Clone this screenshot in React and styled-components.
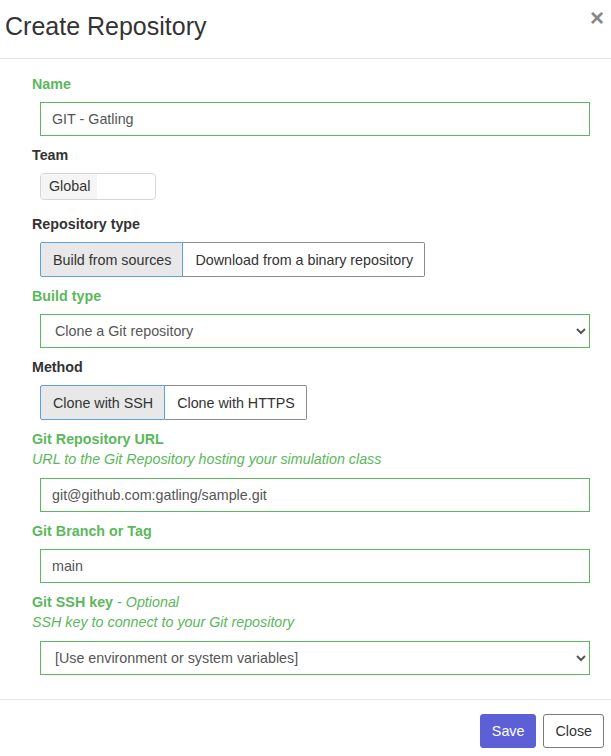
import React from 'react';
import styled, { createGlobalStyle } from 'styled-components';

const GlobalStyle = createGlobalStyle`
  html, body {
    margin: 0;
    padding: 0;
    background: #fff;
  }
  body {
    font-family: "Liberation Sans", Arial, sans-serif;
    font-size: 14.3px;
    line-height: 20px;
    color: #333;
  }
  * {
    box-sizing: border-box;
  }
`;

const Modal = styled.div`
  width: 611px;
  display: flex;
  flex-direction: column;
`;

const Header = styled.div`
  position: relative;
  height: 59px;
  border-bottom: 1px solid #e5e5e5;
  padding: 9px 0 0 5px;
`;

const Title = styled.h4`
  margin: 0;
  font-size: 25px;
  font-weight: 400;
  line-height: 34px;
  color: #333;
`;

const CloseX = styled.button`
  position: absolute;
  top: 4px;
  right: 7px;
  border: none;
  background: none;
  padding: 0;
  font-family: "Liberation Sans", Arial, sans-serif;
  font-size: 24px;
  font-weight: 700;
  line-height: 28px;
  color: #888;
  cursor: pointer;
`;

const Body = styled.div`
  padding: 15px 21px 24px 32px;
  display: flex;
  flex-direction: column;
`;

const Group = styled.div`
  display: flex;
  flex-direction: column;
  margin-bottom: ${(p) => (p.$gap !== undefined ? p.$gap : 9)}px;
`;

const Label = styled.label`
  font-weight: 700;
  line-height: 20px;
  color: ${(p) => (p.$success ? '#5cb85c' : '#333')};
  margin-bottom: ${(p) => (p.$tight ? 0 : 8)}px;
`;

const Optional = styled.span`
  font-weight: 400;
  font-style: italic;
`;

const Help = styled.div`
  font-style: italic;
  color: #5cb85c;
  line-height: 20px;
  margin-bottom: 9px;
`;

const Control = styled.div`
  margin-left: 8px;
  display: flex;
`;

const Input = styled.input`
  width: 100%;
  height: 34px;
  padding: 6px 11px;
  border: 1px solid #5cb85c;
  border-radius: 0;
  font-family: "Liberation Sans", Arial, sans-serif;
  font-size: 14.3px;
  color: #555;
  background: #fff;
  outline: none;
`;

const Select = styled.select`
  width: 100%;
  height: 34px;
  padding: 6px 10px;
  border: 1px solid #5cb85c;
  border-radius: 0;
  font-family: "Liberation Sans", Arial, sans-serif;
  font-size: 14.3px;
  color: #555;
  background: #fff;
  outline: none;
`;

const TeamBox = styled.div`
  display: flex;
  width: 116px;
  height: 27px;
  border: 1px solid #d6d6d6;
  border-radius: 4px;
  overflow: hidden;
`;

const TeamName = styled.span`
  background: #f5f5f5;
  padding: 0 7px 0 8px;
  line-height: 25px;
  color: #333;
`;

const Toggle = styled.div`
  display: flex;
`;

const ToggleButton = styled.button`
  height: 35px;
  padding: 0 11px 0 12px;
  font-family: "Liberation Sans", Arial, sans-serif;
  font-size: 14.3px;
  color: #333;
  background: ${(p) => (p.$active ? '#e8e8e8' : '#fff')};
  border: 1px solid ${(p) => (p.$active ? '#5d9fe0' : '#8c8c8c')};
  border-left-width: ${(p) => (p.$active ? 1 : 0)}px;
  border-radius: ${(p) => (p.$active ? '2px 0 0 2px' : '0 2px 2px 0')};
  cursor: pointer;
`;

const Footer = styled.div`
  border-top: 1px solid #e5e5e5;
  padding: 14px 7px 7px 0;
  display: flex;
  justify-content: flex-end;
  gap: 7px;
`;

const Button = styled.button`
  height: 34px;
  padding: 0 11px;
  font-family: "Liberation Sans", Arial, sans-serif;
  font-size: 14.3px;
  border-radius: 3px;
  border: 1px solid ${(p) => (p.$primary ? '#5c5fd6' : '#7a7a7a')};
  background: ${(p) => (p.$primary ? '#5c5fd6' : '#fff')};
  color: ${(p) => (p.$primary ? '#fff' : '#333')};
  cursor: pointer;
`;

const App = () => {
  return (
    <Modal>
      <GlobalStyle />
      <Header>
        <Title>Create Repository</Title>
        <CloseX>×</CloseX>
      </Header>
      <Body>
        <Group>
          <Label $success>Name</Label>
          <Control>
            <Input defaultValue="GIT - Gatling" />
          </Control>
        </Group>
        <Group $gap={14}>
          <Label>Team</Label>
          <Control>
            <TeamBox>
              <TeamName>Global</TeamName>
            </TeamBox>
          </Control>
        </Group>
        <Group>
          <Label>Repository type</Label>
          <Control>
            <Toggle>
              <ToggleButton $active>Build from sources</ToggleButton>
              <ToggleButton>Download from a binary repository</ToggleButton>
            </Toggle>
          </Control>
        </Group>
        <Group>
          <Label $success>Build type</Label>
          <Control>
            <Select defaultValue="git">
              <option value="git">Clone a Git repository</option>
            </Select>
          </Control>
        </Group>
        <Group>
          <Label>Method</Label>
          <Control>
            <Toggle>
              <ToggleButton $active>Clone with SSH</ToggleButton>
              <ToggleButton>Clone with HTTPS</ToggleButton>
            </Toggle>
          </Control>
        </Group>
        <Group>
          <Label $success $tight>Git Repository URL</Label>
          <Help>URL to the Git Repository hosting your simulation class</Help>
          <Control>
            <Input defaultValue="git@github.com:gatling/sample.git" />
          </Control>
        </Group>
        <Group>
          <Label $success>Git Branch or Tag</Label>
          <Control>
            <Input defaultValue="main" />
          </Control>
        </Group>
        <Group $gap={0}>
          <Label $success $tight>
            Git SSH key <Optional>- Optional</Optional>
          </Label>
          <Help>SSH key to connect to your Git repository</Help>
          <Control>
            <Select defaultValue="env">
              <option value="env">[Use environment or system variables]</option>
            </Select>
          </Control>
        </Group>
      </Body>
      <Footer>
        <Button $primary>Save</Button>
        <Button>Close</Button>
      </Footer>
    </Modal>
  );
};

export default App;
